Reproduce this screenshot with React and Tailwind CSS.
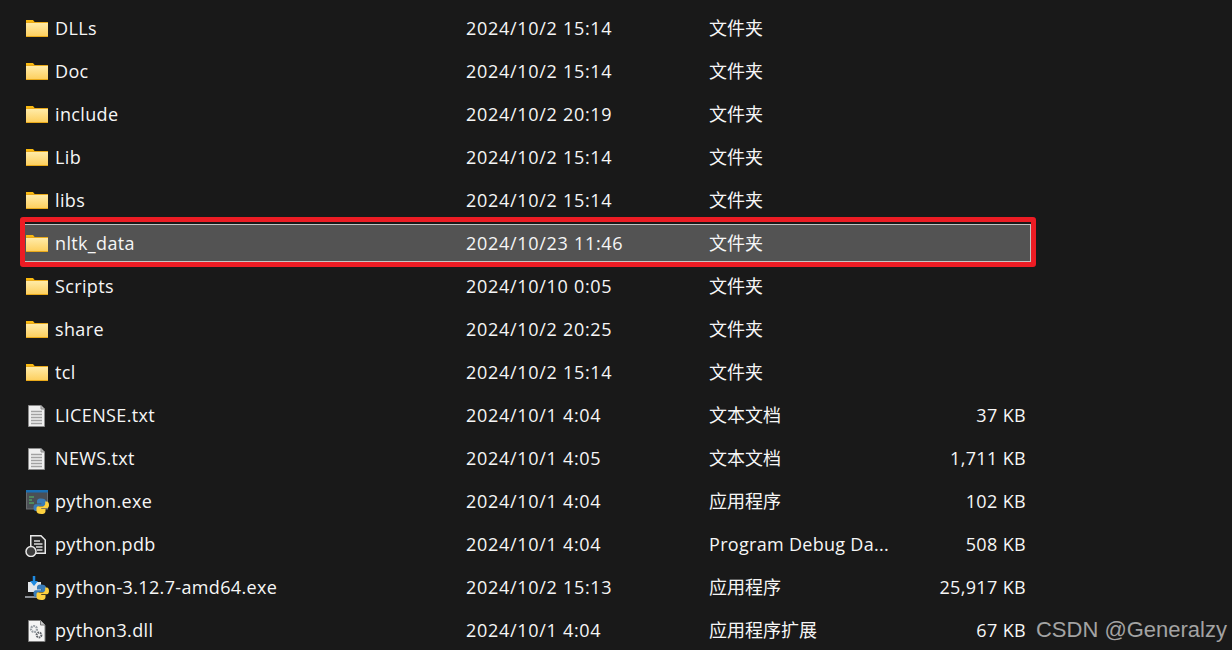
import React from 'react';

const rows = [
  { name: 'DLLs', date: '2024/10/2 15:14', type: '文件夹', icon: 'folder' },
  { name: 'Doc', date: '2024/10/2 15:14', type: '文件夹', icon: 'folder' },
  { name: 'include', date: '2024/10/2 20:19', type: '文件夹', icon: 'folder' },
  { name: 'Lib', date: '2024/10/2 15:14', type: '文件夹', icon: 'folder' },
  { name: 'libs', date: '2024/10/2 15:14', type: '文件夹', icon: 'folder' },
  { name: 'nltk_data', date: '2024/10/23 11:46', type: '文件夹', icon: 'folder', selected: true },
  { name: 'Scripts', date: '2024/10/10 0:05', type: '文件夹', icon: 'folder' },
  { name: 'share', date: '2024/10/2 20:25', type: '文件夹', icon: 'folder' },
  { name: 'tcl', date: '2024/10/2 15:14', type: '文件夹', icon: 'folder' },
  { name: 'LICENSE.txt', date: '2024/10/1 4:04', type: '文本文档', size: '37 KB', icon: 'text' },
  { name: 'NEWS.txt', date: '2024/10/1 4:05', type: '文本文档', size: '1,711 KB', icon: 'text' },
  { name: 'python.exe', date: '2024/10/1 4:04', type: '应用程序', size: '102 KB', icon: 'exe' },
  { name: 'python.pdb', date: '2024/10/1 4:04', type: 'Program Debug Da...', size: '508 KB', icon: 'pdb' },
  { name: 'python-3.12.7-amd64.exe', date: '2024/10/2 15:13', type: '应用程序', size: '25,917 KB', icon: 'setup' },
  { name: 'python3.dll', date: '2024/10/1 4:04', type: '应用程序扩展', size: '67 KB', icon: 'dll' },
];

const FolderIcon = () => (
  <svg width="24" height="24" viewBox="0 0 24 24">
    <defs>
      <linearGradient id="fold" x1="0" y1="0" x2="0" y2="1">
        <stop offset="0" stopColor="#ffeba8" />
        <stop offset="1" stopColor="#fdd060" />
      </linearGradient>
    </defs>
    <path d="M1 3h7l2 2.500H1z" fill="#f9b90f" />
    <rect x="1" y="5" width="22" height="15" fill="#e9a91a" />
    <rect x="1" y="6" width="22" height="13" fill="url(#fold)" />
  </svg>
);

const TextIcon = () => (
  <svg width="24" height="24" viewBox="0 0 24 24">
    <path d="M3.500 1.500H16L19.500 5V22.500H3.500z" fill="#efefef" stroke="#8c8c8c" />
    <path d="M16 1.500V5H19.500" fill="#bdbdbd" stroke="#8c8c8c" />
    <path d="M6 7.500h11M6 10.500h11M6 13.500h11M6 16.500h11M6 19.500h11" stroke="#a2a2a2" strokeWidth="1.400" />
  </svg>
);

// the two interlocked snakes of the python logo
const Snakes = ({ x, y }) => (
  <g transform={`translate(${x} ${y})`}>
    <path d="M7.500 0C4 0 3.500 1.500 3.500 3v2h4.300v.8H2.200C.7 5.800 0 7.200 0 9c0 2 .8 3.500 2.200 3.500h1.600v-2.300c0-1.500 1.200-2.600 2.700-2.600h3.800c1.200 0 2.200-1 2.200-2.200V3c0-1.800-1.800-3-5-3z" fill="#3a7cb8" />
    <path d="M8 15.500c3.500 0 4-1.500 4-3v-2H7.700v-.8h5.600c1.500 0 2.200-1.400 2.200-3.200 0-2-.8-3.500-2.200-3.500h-1.600v2.300c0 1.500-1.200 2.600-2.700 2.600H5.200C4 7.600 3 8.600 3 9.800v2.700c0 1.800 1.800 3 5 3z" fill="#fdd13f" />
  </g>
);

const ExeIcon = () => (
  <svg width="24" height="24" viewBox="0 0 24 24">
    <rect x="1.500" y="1" width="21" height="18" fill="#4a4f55" stroke="#6a6d70" />
    <rect x="1" y="0" width="22" height="2.500" fill="#1a6fb3" />
    <path d="M4 7h5M4 10h3M4 13h5" stroke="#57c26a" strokeWidth="1.200" />
    <Snakes x="8.500" y="8.500" />
  </svg>
);

const PdbIcon = () => (
  <svg width="24" height="24" viewBox="0 0 24 24">
    <path d="M5.750 2.750H16L20.250 7V20.250H5.750z" fill="#262626" stroke="#e8e8e8" strokeWidth="1.500" />
    <path d="M9 8h6M9 11h8.500M11 14h6.500M12 17h5.500" stroke="#dcdcdc" strokeWidth="1.600" />
    <circle cx="6" cy="18.500" r="5" fill="#3e3e3e" stroke="#e8e8e8" strokeWidth="1.500" />
  </svg>
);

const SetupIcon = () => (
  <svg width="24" height="24" viewBox="0 0 24 24">
    <path d="M3 6h13v10H3z" fill="#e3e6ea" />
    <path d="M0 20h14v2H0z" fill="#8b8f94" />
    <path d="M9 0v6" stroke="#1f8ae0" strokeWidth="2.500" />
    <path d="M5 5h8l-4 5z" fill="#1f8ae0" />
    <Snakes x="8.500" y="8.500" />
  </svg>
);

const DllIcon = () => (
  <svg width="24" height="24" viewBox="0 0 24 24">
    <path d="M3.500 1.500H15.500L20 6V22.500H3.500z" fill="#f4f4f4" stroke="#7d7d7d" />
    <path d="M15.500 1.500V6H20" fill="#c9c9c9" stroke="#7d7d7d" />
    <circle cx="9" cy="10" r="3" fill="none" stroke="#9aa0a6" strokeWidth="2.200" strokeDasharray="1.800 0.800" />
    <circle cx="14" cy="16" r="2.400" fill="none" stroke="#5f6368" strokeWidth="2" strokeDasharray="1.500 0.700" />
  </svg>
);

const icons = {
  folder: FolderIcon,
  text: TextIcon,
  exe: ExeIcon,
  pdb: PdbIcon,
  setup: SetupIcon,
  dll: DllIcon,
};

const Row = ({ row }) => {
  const Icon = icons[row.icon];
  return (
    <div
      className={`relative grid h-[43px] grid-cols-[30px_411px_243px_180px_137px] items-center pl-[25px] ${
        row.selected ? 'z-10' : ''
      }`}
    >
      {row.selected && (
        <div className="absolute left-[20px] top-[-5px] h-[50px] w-[1016px] rounded-[3px] border-[5px] border-[#ed1c24]">
          <div className="mt-[2px] h-[38px] border border-l-0 border-[#c4c4c4] bg-[#535353]" />
        </div>
      )}
      <span className="relative flex h-6 items-center">
        <Icon />
      </span>
      <span className="relative truncate tracking-[0.35px]">{row.name}</span>
      <span className="relative tracking-[0.7px]">{row.date}</span>
      <span className={`relative whitespace-nowrap ${row.size === '508 KB' ? 'tracking-[0.3px]' : ''}`}>{row.type}</span>
      <span className="relative text-right tracking-[0.35px]">{row.size}</span>
    </div>
  );
};

export default function App() {
  return (
    <div className="relative h-[650px] w-[1232px] overflow-hidden bg-[#191919] pt-[7px] font-['Open_Sans','Noto_Sans_CJK_SC',sans-serif] text-[18px] text-[#f6f6f6]">
      {rows.map((row) => (
        <Row key={row.name} row={row} />
      ))}
      <div className="absolute bottom-[5px] right-[5px] font-['Liberation_Sans',sans-serif] text-[22px] leading-[30px] text-[#a3a3a3]">
        CSDN @Generalzy
      </div>
    </div>
  );
}
